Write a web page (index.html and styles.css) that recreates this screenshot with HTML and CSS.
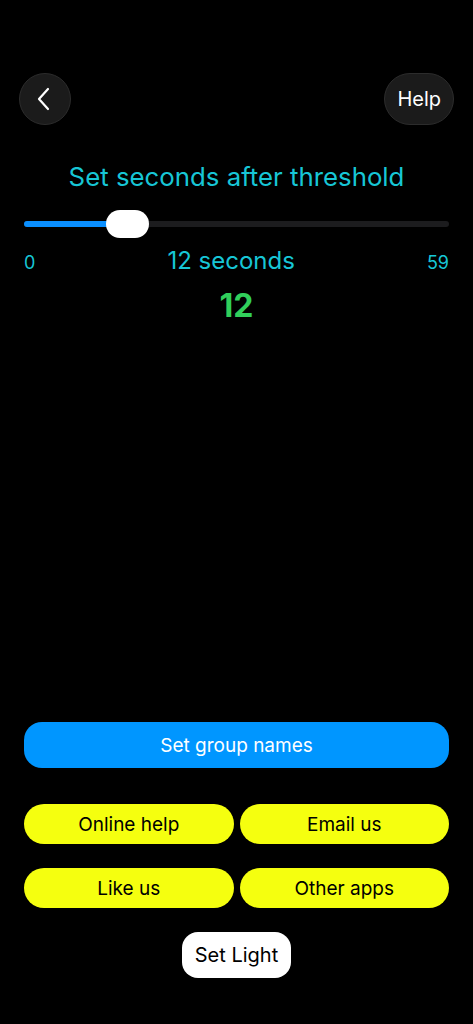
FILE: index.html
```html
<!DOCTYPE html>
<html lang="en">
<head>
    <meta charset="UTF-8">
    <meta name="viewport" content="width=device-width, initial-scale=1.0">
    <title>Threshold Seconds</title>
    <link rel="stylesheet" href="styles.css">
</head>
<body>
    <div class="page">
        <div class="top-bar">
            <button class="back-button" aria-label="Back">
                <svg width="14" height="24" viewBox="0 0 14 24">
                    <path d="M11 2 L2 12 L11 22" fill="none" stroke="#fff" stroke-width="2.2" stroke-linecap="round" stroke-linejoin="round"/>
                </svg>
            </button>
            <button class="help-button">Help</button>
        </div>

        <div class="title">Set seconds after threshold</div>

        <div class="slider">
            <div class="slider-track">
                <div class="slider-fill" style="width: 20.3%"></div>
            </div>
            <div class="slider-thumb" style="left: 19.2%"></div>
        </div>

        <div class="slider-labels">
            <span class="slider-min">0</span>
            <span class="slider-value">12 seconds</span>
            <span class="slider-max">59</span>
        </div>

        <div class="big-value">12</div>

        <div class="actions">
            <button class="btn-blue">Set group names</button>
            <div class="btn-grid">
                <button class="btn-yellow">Online help</button>
                <button class="btn-yellow">Email us</button>
                <button class="btn-yellow">Like us</button>
                <button class="btn-yellow">Other apps</button>
            </div>
            <button class="btn-light">Set Light</button>
        </div>
    </div>
</body>
</html>
```

FILE: styles.css
```css
body, html {
    margin: 0;
    height: 100%;
    background-color: #000;
    font-family: 'Inter', 'Liberation Sans', sans-serif;
}
button {
    font-family: inherit;
    border: none;
    cursor: pointer;
}
.page {
    display: flex;
    flex-direction: column;
    min-height: 100%;
    box-sizing: border-box;
    padding: 73px 24px 46px;
}
.top-bar {
    display: flex;
    justify-content: space-between;
    align-items: center;
    margin: 0 -5px;
}
.back-button {
    width: 52px;
    height: 52px;
    border-radius: 50%;
    background-color: #1b1b1b;
    border: 1px solid #2c2c2c;
    display: flex;
    align-items: center;
    justify-content: center;
    padding: 0 2px 0 0;
}
.help-button {
    height: 52px;
    padding: 0 12px;
    border-radius: 26px;
    background-color: #1b1b1b;
    border: 1px solid #2c2c2c;
    color: #fff;
    font-size: 20px;
}
.title {
    margin-top: 36px;
    text-align: center;
    color: #17c6d6;
    font-size: 25.8px;
    line-height: 32px;
}
.slider {
    position: relative;
    height: 28px;
    margin-top: 17px;
    display: flex;
    align-items: center;
}
.slider-track {
    flex: 1;
    height: 6px;
    border-radius: 3px;
    background-color: #1c1c1e;
    overflow: hidden;
}
.slider-fill {
    height: 100%;
    background-color: #0a8fff;
}
.slider-thumb {
    position: absolute;
    top: 0;
    width: 43px;
    height: 28px;
    border-radius: 14px;
    background-color: #fff;
}
.slider-labels {
    display: flex;
    justify-content: space-between;
    align-items: baseline;
    margin-top: 8px;
    color: #17c6d6;
}
.slider-min, .slider-max {
    font-size: 18px;
}
.slider-value {
    font-size: 24px;
}
.big-value {
    margin-top: 11px;
    text-align: center;
    color: #31cf5b;
    font-size: 32px;
    font-weight: bold;
}
.actions {
    margin-top: auto;
    display: flex;
    flex-direction: column;
    align-items: center;
}
.btn-blue {
    width: 100%;
    height: 46px;
    border-radius: 18px;
    background-color: #0096ff;
    color: #fff;
    font-size: 19px;
}
.btn-grid {
    width: 100%;
    display: grid;
    grid-template-columns: 1fr 1fr;
    gap: 24px 6px;
    margin-top: 36px;
}
.btn-yellow {
    height: 40px;
    border-radius: 20px;
    background-color: #f5ff0f;
    color: #000;
    font-size: 19px;
}
.btn-light {
    margin-top: 24px;
    height: 46px;
    padding: 0 13px;
    border-radius: 16px;
    background-color: #fff;
    color: #000;
    font-size: 20px;
}
```
